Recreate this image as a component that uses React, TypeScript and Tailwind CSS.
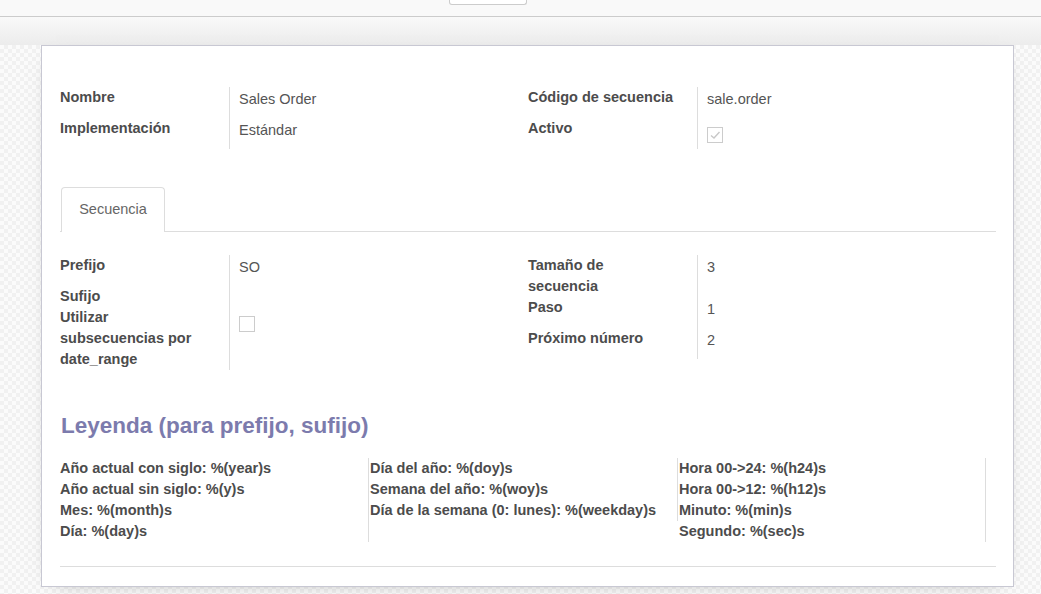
import type { ReactNode } from "react";

type Field = { label: string; value?: ReactNode; h: string };

const Check = ({ checked = false }: { checked?: boolean }) => (
  <div className="mt-[7px] flex h-[16px] w-[16px] items-center justify-center border border-[#cccccc] bg-white">
    {checked && (
      <svg width="12" height="12" viewBox="0 0 12 12">
        <polyline points="2,6.5 5,9 10.5,3" fill="none" stroke="#c8c8c8" strokeWidth="1.4" />
      </svg>
    )}
  </div>
);

const FieldGroup = ({ fields }: { fields: Field[] }) => (
  <div className="flex flex-col">
    {fields.map((f) => (
      <div key={f.label} className={`flex ${f.h}`}>
        <div className="w-[170px] shrink-0 border-r border-[#dddddd] pr-[21px] font-bold leading-[21px] text-[#4c4c4c]">
          {f.label}
        </div>
        <div className="pl-[9px] pt-[2px] leading-[21px] text-[#555555]">{f.value}</div>
      </div>
    ))}
  </div>
);

const legend = {
  col1: [
    "Año actual con siglo: %(year)s",
    "Año actual sin siglo: %(y)s",
    "Mes: %(month)s",
    "Día: %(day)s",
  ],
  col2: ["Día del año: %(doy)s", "Semana del año: %(woy)s", "Día de la semana (0: lunes): %(weekday)s"],
  col3: ["Hora 00->24: %(h24)s", "Hora 00->12: %(h12)s", "Minuto: %(min)s"],
};

export default function App() {
  return (
    <div className="relative h-[594px] w-[1041px] overflow-hidden bg-white font-['Liberation_Sans',Arial,sans-serif] text-[14.5px]">
      {/* control panel */}
      <div className="h-[17px] border-b border-[#cccccc] bg-[#f9f9f9]">
        <div className="ml-[449px] h-[5px] w-[78px] rounded-b-[3px] border border-t-0 border-[#cccccc] bg-white" />
      </div>
      <div className="h-[28px] bg-gradient-to-b from-[#f9f9f9] to-[#ececec]" />

      {/* sheet background */}
      <div className="h-[549px] bg-[#f8f8f8] bg-[image:repeating-conic-gradient(#f1f1f1_0_25%,#fbfbfb_0_50%)] bg-[length:8px_8px] pl-[41px] pr-[27px]">
        <div className="border border-[#c8c8d3] bg-white pb-[19px] pl-[18px] pr-[17px] pt-[41px] shadow-[0_5px_20px_-15px_rgba(0,0,0,0.6)]">
          <div className="grid grid-cols-2">
            <FieldGroup
              fields={[
                { label: "Nombre", value: "Sales Order", h: "h-[31px]" },
                { label: "Implementación", value: "Estándar", h: "h-[31px]" },
              ]}
            />
            <FieldGroup
              fields={[
                { label: "Código de secuencia", value: "sale.order", h: "h-[31px]" },
                { label: "Activo", value: <Check checked />, h: "h-[31px]" },
              ]}
            />
          </div>

          {/* tabs */}
          <div className="mt-[38px] flex h-[45px] border-b border-[#dddddd]">
            <div className="-mb-px ml-px flex h-[45px] w-[104px] items-center justify-center rounded-t-[4px] border border-b-0 border-[#dddddd] bg-white text-[#666666]">
              Secuencia
            </div>
          </div>

          <div className="mt-[23px] grid grid-cols-2 items-start">
            <FieldGroup
              fields={[
                { label: "Prefijo", value: "SO", h: "min-h-[31px]" },
                { label: "Sufijo", h: "min-h-[21px]" },
                { label: "Utilizar subsecuencias por date_range", value: <Check />, h: "min-h-[21px]" },
              ]}
            />
            <FieldGroup
              fields={[
                { label: "Tamaño de secuencia", value: "3", h: "min-h-[31px]" },
                { label: "Paso", value: "1", h: "min-h-[31px]" },
                { label: "Próximo número", value: "2", h: "min-h-[31px]" },
              ]}
            />
          </div>

          <h3 className="mt-[42px] pl-px text-[22.5px] font-bold leading-[27px] text-[#7c7bad]">
            Leyenda (para prefijo, sufijo)
          </h3>

          <div className="mt-[19px] flex font-bold leading-[21px] text-[#4c4c4c]">
            <div className="w-[308px]">
              {legend.col1.map((t) => (
                <div key={t}>{t}</div>
              ))}
            </div>
            <div className="w-[309px] border-l border-[#dddddd] pl-px">
              {legend.col2.map((t) => (
                <div key={t}>{t}</div>
              ))}
            </div>
            <div className="w-[309px] border-r border-[#dddddd]">
              <div className="border-l border-[#dddddd] pl-px">
                {legend.col3.map((t) => (
                  <div key={t}>{t}</div>
                ))}
              </div>
              <div className="pl-[2px]">Segundo: %(sec)s</div>
            </div>
          </div>

          <div className="mt-[24px] border-t border-[#dddddd]" />
        </div>
      </div>
    </div>
  );
}
